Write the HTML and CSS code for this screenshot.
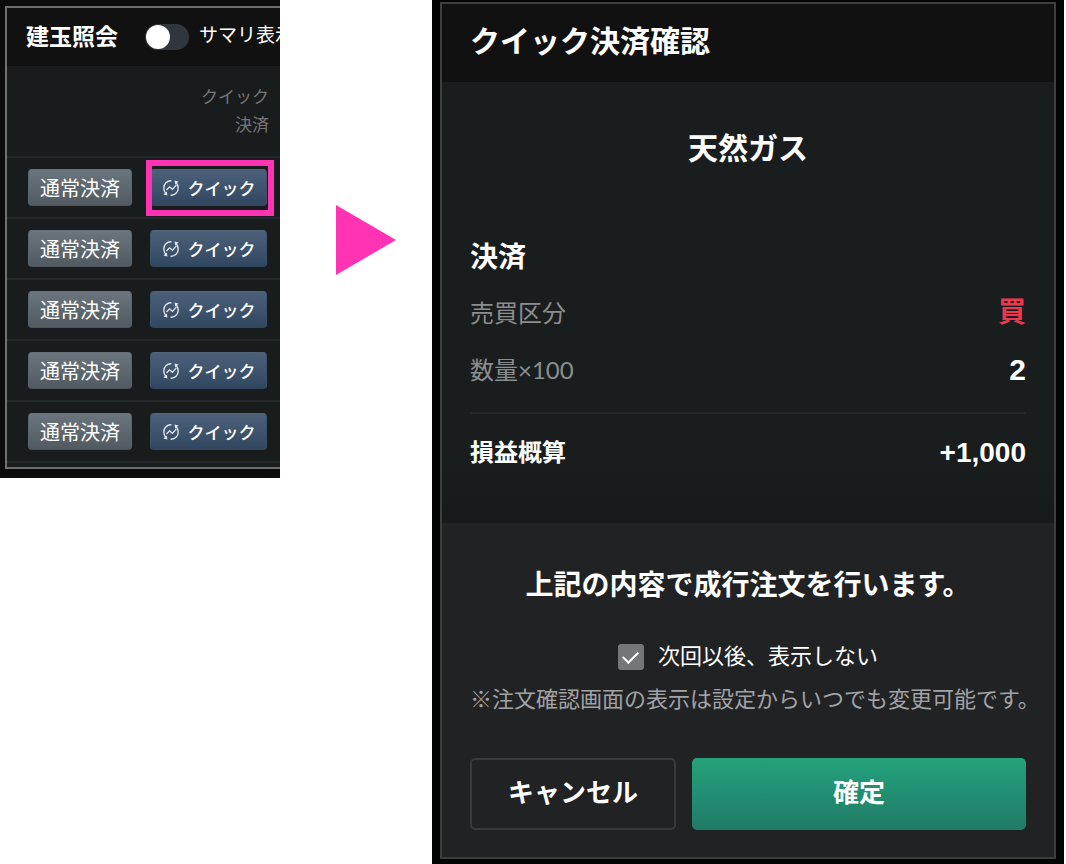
FILE: index.html
```html
<!DOCTYPE html>
<html lang="ja">
<head>
<meta charset="utf-8">
<meta name="viewport" content="width=device-width, initial-scale=1">
<title>クイック決済確認</title>
<link rel="stylesheet" href="styles.css">
</head>
<body>
<svg class="sprite" aria-hidden="true">
  <symbol id="quick" viewBox="0 0 20 20">
    <g fill="none" stroke="currentColor" stroke-width="1.500">
      <path d="M10.500 2C5.500 1.600 2 5.300 2 9.800c0 2.600.8 4.600 2.200 6"/>
      <path d="M9.500 18c5 .4 8.500-3.300 8.500-7.800 0-2.600-.8-4.600-2.200-6"/>
      <path d="M5 12.300l3.400-3.600 3.200 2.800 4.400-5"/>
    </g>
    <path fill="currentColor" d="M1.500 17.300l3.900-3.400.6 4.300zM18.500 2.700l-3.900 3.400-.6-4.300z"/>
  </symbol>
</svg>
<main class="flow">
  <section class="positions-frame">
    <div class="positions">
      <header class="positions-header">
        <h2 class="positions-title">建玉照会</h2>
        <label class="summary"><input class="switch" type="checkbox" role="switch"><span>サマリ表示</span></label>
      </header>
      <table class="positions-table">
        <thead>
          <tr><th></th><th class="quick-head">クイック<br>決済</th></tr>
        </thead>
        <tbody>
          <tr><td><button class="btn normal">通常決済</button></td><td><div class="highlight"><button class="btn quick"><svg class="quick-icon"><use href="#quick"/></svg>クイック</button></div></td></tr>
          <tr><td><button class="btn normal">通常決済</button></td><td><button class="btn quick"><svg class="quick-icon"><use href="#quick"/></svg>クイック</button></td></tr>
          <tr><td><button class="btn normal">通常決済</button></td><td><button class="btn quick"><svg class="quick-icon"><use href="#quick"/></svg>クイック</button></td></tr>
          <tr><td><button class="btn normal">通常決済</button></td><td><button class="btn quick"><svg class="quick-icon"><use href="#quick"/></svg>クイック</button></td></tr>
          <tr><td><button class="btn normal">通常決済</button></td><td><button class="btn quick"><svg class="quick-icon"><use href="#quick"/></svg>クイック</button></td></tr>
        </tbody>
      </table>
    </div>
  </section>

  <div class="arrow">
    <svg class="arrow-shape" viewBox="0 0 60 70" aria-hidden="true"><path fill="#ff33b4" d="M0 0l60 35L0 70z"/></svg>
  </div>

  <section class="dialog-frame">
    <div class="dialog">
      <header class="dialog-header"><h1 class="dialog-title">クイック決済確認</h1></header>
      <div class="details">
        <h2 class="product">天然ガス</h2>
        <h3 class="group-title">決済</h3>
        <dl class="rows">
          <div class="row"><dt>売買区分</dt><dd class="buy">買</dd></div>
          <div class="row"><dt>数量×100</dt><dd class="quantity">2</dd></div>
        </dl>
        <dl class="total">
          <div class="row"><dt>損益概算</dt><dd>+1,000</dd></div>
        </dl>
      </div>
      <footer class="confirm">
        <p class="message">上記の内容で成行注文を行います。</p>
        <label class="skip"><input class="check" type="checkbox" checked><span>次回以後、表示しない</span></label>
        <p class="note">※注文確認画面の表示は設定からいつでも変更可能です。</p>
        <div class="actions">
          <button class="action cancel">キャンセル</button>
          <button class="action ok">確定</button>
        </div>
      </footer>
    </div>
  </section>
</main>
</body>
</html>
```
FILE: styles.css
```css
* {
  box-sizing: border-box;
}

body {
  margin: 0;
  background: #fff;
  color: #fff;
  font-family: "Liberation Sans", "Noto Sans CJK JP", sans-serif;
}

h1, h2, h3, p, dl, dd {
  margin: 0;
}

button, input {
  font: inherit;
  margin: 0;
}

.sprite {
  display: none;
}

.flow {
  display: grid;
  grid-template-columns: 280px 152px minmax(0, 1fr);
  align-items: start;
  padding-right: 2px;
}

/* Position list */
.positions-frame {
  padding: 6px 0 9px 5px;
  background: #0c0c0c;
  overflow: hidden;
}

.positions {
  padding-bottom: 4px;
  border: 2px solid #707070;
  border-right: 0;
  background: #191c1d;
  overflow: hidden;
}

.positions-header {
  display: flex;
  align-items: center;
  gap: 27px;
  height: 58px;
  padding-left: 19px;
  background: #111;
  white-space: nowrap;
}

.positions-title {
  flex: none;
  font-size: 23px;
  line-height: 32px;
}

.summary {
  display: flex;
  align-items: center;
  gap: 10px;
  font-size: 19px;
  line-height: 28px;
}

.summary span {
  padding-bottom: 2px;
}

.switch {
  appearance: none;
  flex: none;
  width: 44px;
  height: 26px;
  padding: 1px;
  border-radius: 13px;
  background: #30363c;
}

.switch::before {
  content: "";
  display: block;
  width: 24px;
  height: 24px;
  border-radius: 50%;
  background: #fff;
}

.positions-table {
  width: 100%;
  border-collapse: separate;
  border-spacing: 0;
}

.positions-table th {
  height: 92px;
  padding: 2px 5px 0 0;
  border-bottom: 2px solid #24282a;
  color: #757575;
  font-size: 17px;
  font-weight: 400;
  line-height: 28px;
  text-align: right;
}

.positions-table td {
  height: 61px;
  padding: 0 0 0 21px;
  border-bottom: 2px solid #24282a;
}

.positions-table td + td {
  padding: 0 13px 0 18px;
}

.positions-table .quick-head {
  padding-right: 11px;
}

.btn {
  display: flex;
  align-items: center;
  justify-content: center;
  height: 37px;
  padding: 0;
  border: 1px solid;
  border-radius: 4px;
  color: #fff;
  white-space: nowrap;
}

.normal {
  width: 104px;
  border-color: #69727a #5c656b #4d565c;
  background: linear-gradient(#6b757e, #515a60);
  font-size: 20px;
}

.quick {
  width: 117px;
  gap: 8px;
  border-color: #50647c #3e536b #314760;
  background: linear-gradient(#4c607a, #31475f);
  font-size: 17px;
  font-weight: 500;
}

.quick-icon {
  width: 18px;
  height: 18px;
  color: #dfe5ec;
}

.highlight {
  position: relative;
}

.highlight::after {
  content: "";
  position: absolute;
  inset: -9px -7px -10px -4px;
  border: 6px solid #ff33b4;
  pointer-events: none;
}

/* Step arrow */
.arrow {
  padding: 205px 36px 0 56px;
}

.arrow-shape {
  display: block;
  width: 100%;
}

/* Confirmation dialog */
.dialog-frame {
  padding: 2px 8px 5px;
  background: #030404;
}

.dialog {
  border: 2px solid #3e3e3e;
  background: #1a1d1e;
}

.dialog-header {
  padding: 16px 28px 18px;
  background: #111;
}

.dialog-title {
  font-size: 30px;
  line-height: 44px;
}

.details {
  padding: 46px 28px 50px;
  background: linear-gradient(#1a1d1e 88%, #171a1b);
}

.product {
  font-size: 30px;
  line-height: 42px;
  text-align: center;
}

.group-title {
  margin-top: 68px;
  font-size: 28px;
  line-height: 40px;
}

.rows {
  padding: 6px 0 14px;
  border-bottom: 2px solid #25282a;
}

.row {
  display: flex;
  align-items: center;
  justify-content: space-between;
  font-size: 24px;
  line-height: 57px;
}

.rows dt {
  color: #8c8d8e;
  font-family: Lato, "Noto Sans CJK JP", sans-serif;
}

.row dd {
  font-size: 28px;
  font-weight: 700;
}

.row .buy {
  color: #ee3850;
}

.row .quantity {
  font-size: 30px;
}

.total {
  padding-top: 19px;
  font-weight: 700;
}

.total .row {
  line-height: 40px;
}

.confirm {
  padding: 42px 28px 27px;
  background: #212224;
}

.message {
  font-size: 28px;
  font-weight: 700;
  line-height: 42px;
  text-align: center;
}

.skip {
  display: flex;
  align-items: center;
  justify-content: center;
  gap: 14px;
  margin-top: 37px;
  font-size: 22px;
  line-height: 26px;
}

.check {
  appearance: none;
  display: grid;
  place-items: center;
  width: 26px;
  height: 26px;
  border-radius: 3px;
  background: #757678;
}

.check:checked::before {
  content: "";
  width: 13px;
  height: 7px;
  border: solid #fff;
  border-width: 0 0 2px 2px;
  margin-bottom: 3px;
  transform: rotate(-45deg);
}

.note {
  margin-top: 14px;
  color: #a2a3a4;
  font-size: 22px;
  line-height: 32px;
  white-space: nowrap;
}

.actions {
  display: grid;
  grid-template-columns: 206fr 334fr;
  gap: 16px;
  margin-top: 42px;
}

.action {
  height: 72px;
  padding: 0 0 8px;
  border: 2px solid #37393b;
  border-radius: 5px;
  color: #fff;
  font-size: 26px;
  font-weight: 700;
}

.cancel {
  background: transparent;
}

.ok {
  border: 0;
  background: linear-gradient(#24a27c, #207b66);
}
```
